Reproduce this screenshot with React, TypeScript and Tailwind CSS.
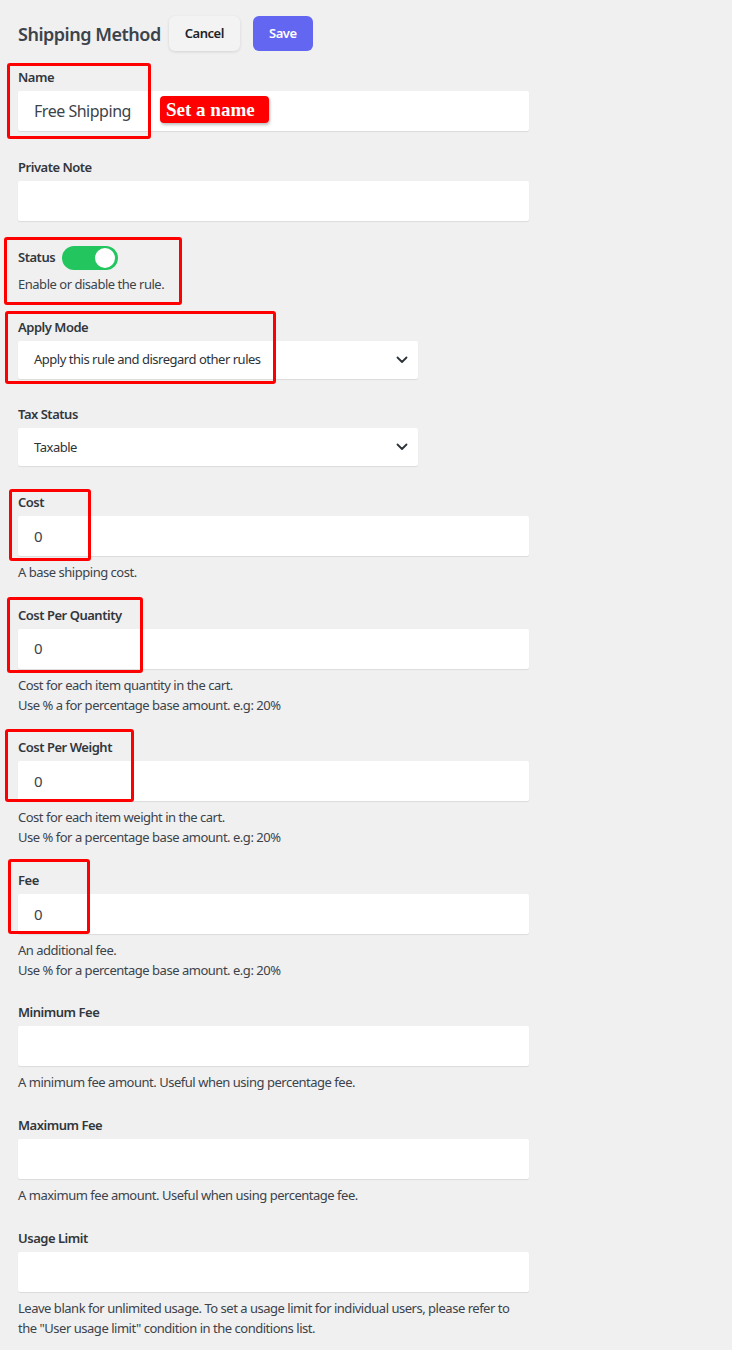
import type { ReactNode } from 'react';

const FONT = { fontFamily: '"Noto Sans", "Open Sans", Arial, sans-serif' };

function Chevron() {
  return (
    <svg width="12" height="8" viewBox="0 0 12 8" fill="none" className="text-[#2c3338]">
      <path d="M1.5 1.5 6 6l4.5-4.5" stroke="currentColor" strokeWidth="1.8" strokeLinecap="round" strokeLinejoin="round" />
    </svg>
  );
}

interface FieldProps {
  label: string;
  value?: string;
  desc?: ReactNode;
  valueClass?: string;
}

function TextField({ label, value = '', desc, valueClass = 'text-[15px]' }: FieldProps) {
  return (
    <div className={desc ? 'flex flex-col mb-[22.6px]' : 'flex flex-col mb-[25.6px]'}>
      <label className="h-5 leading-5 text-[13px] font-semibold text-[#32373c]">{label}</label>
      <div
        className={`mt-1 h-10 w-[511px] bg-white rounded-[2px] shadow-[0_1px_1px_rgba(0,0,0,0.09)] flex items-center pl-4 text-[#3c434a] ${valueClass}`}
      >
        {value}
      </div>
      {desc && <div className="mt-1.5 text-[13px] leading-5 text-[#3c434a] w-[530px]">{desc}</div>}
    </div>
  );
}

function SelectField({ label, value }: { label: string; value: string }) {
  return (
    <div className="flex flex-col mb-[25.6px]">
      <label className="h-5 leading-5 text-[13px] font-semibold text-[#32373c]">{label}</label>
      <div className="mt-1 h-[38px] w-[400px] bg-white rounded-[2px] shadow-[0_1px_1px_rgba(0,0,0,0.09)] flex items-center justify-between pl-4 pr-[10px] text-[13px] text-[#2c3338]">
        <span>{value}</span>
        <Chevron />
      </div>
    </div>
  );
}

// red annotation frames drawn over the form
const boxes = [
  'left-[7px] top-[63px] w-[144px] h-[76px]',
  'left-[4px] top-[237px] w-[178px] h-[68px]',
  'left-[5px] top-[311px] w-[271px] h-[73px]',
  'left-[9px] top-[489px] w-[82px] h-[72px]',
  'left-[7px] top-[597px] w-[136px] h-[76px]',
  'left-[5px] top-[729px] w-[129px] h-[73px]',
  'left-[8px] top-[859px] w-[82px] h-[75px]',
];

export default function App() {
  return (
    <div className="relative min-h-[1350px] w-[732px] bg-[#f0f0f1] pl-[18px] pt-4 tracking-[-0.03em]" style={FONT}>
      <div className="flex items-center h-[35px] mb-4">
        <h1 className="text-[18px] font-semibold text-[#3c434a] mr-2 leading-none">Shipping Method</h1>
        <button className="h-[35px] w-[71px] rounded-md bg-[#f3f3f4] shadow-[0_1px_3px_rgba(0,0,0,0.12)] text-[13px] font-semibold text-[#1d2327]">
          Cancel
        </button>
        <button className="ml-[13px] h-[35px] w-[60px] rounded-md bg-[#6366f1] text-[13px] font-semibold text-white">
          Save
        </button>
      </div>

      <TextField label="Name" value="Free Shipping" valueClass="text-[16px]" />
      <TextField label="Private Note" />

      <div className="flex flex-col mb-[22.6px]">
        <div className="flex items-center h-6 gap-[7px]">
          <span className="text-[13px] font-semibold text-[#32373c]">Status</span>
          <span className="relative w-14 h-6 rounded-full bg-[#22c55e]">
            <span className="absolute right-[3px] top-[2px] w-5 h-5 rounded-full bg-white" />
          </span>
        </div>
        <div className="mt-1 text-[13px] leading-5 text-[#3c434a]">Enable or disable the rule.</div>
      </div>

      <SelectField label="Apply Mode" value="Apply this rule and disregard other rules" />
      <SelectField label="Tax Status" value="Taxable" />

      <TextField label="Cost" value="0" desc="A base shipping cost." />
      <TextField
        label="Cost Per Quantity"
        value="0"
        desc={
          <>
            Cost for each item quantity in the cart.
            <br />
            Use % a for percentage base amount. e.g: 20%
          </>
        }
      />
      <TextField
        label="Cost Per Weight"
        value="0"
        desc={
          <>
            Cost for each item weight in the cart.
            <br />
            Use % for a percentage base amount. e.g: 20%
          </>
        }
      />
      <TextField
        label="Fee"
        value="0"
        desc={
          <>
            An additional fee.
            <br />
            Use % for a percentage base amount. e.g: 20%
          </>
        }
      />
      <TextField label="Minimum Fee" desc="A minimum fee amount. Useful when using percentage fee." />
      <TextField label="Maximum Fee" desc="A maximum fee amount. Useful when using percentage fee." />
      <TextField
        label="Usage Limit"
        desc={
          <>
            <span className="whitespace-nowrap">
              Leave blank for unlimited usage. To set a usage limit for individual users, please refer to
            </span>
            <br />
            the "User usage limit" condition in the conditions list.
          </>
        }
      />

      {boxes.map((b) => (
        <div key={b} className={`absolute ${b} border-[3px] border-[#f00] rounded-[3px] pointer-events-none`} />
      ))}

      <div
        className="absolute left-[160px] top-[96px] w-[109px] h-[27px] bg-[#f00] rounded-[4px] shadow-[1px_2px_3px_rgba(0,0,0,0.25)] flex items-center pl-[6px] text-white text-[19px] font-bold leading-none tracking-normal"
        style={{ fontFamily: '"Liberation Serif", "Times New Roman", serif' }}
      >
        Set a name
      </div>
    </div>
  );
}
